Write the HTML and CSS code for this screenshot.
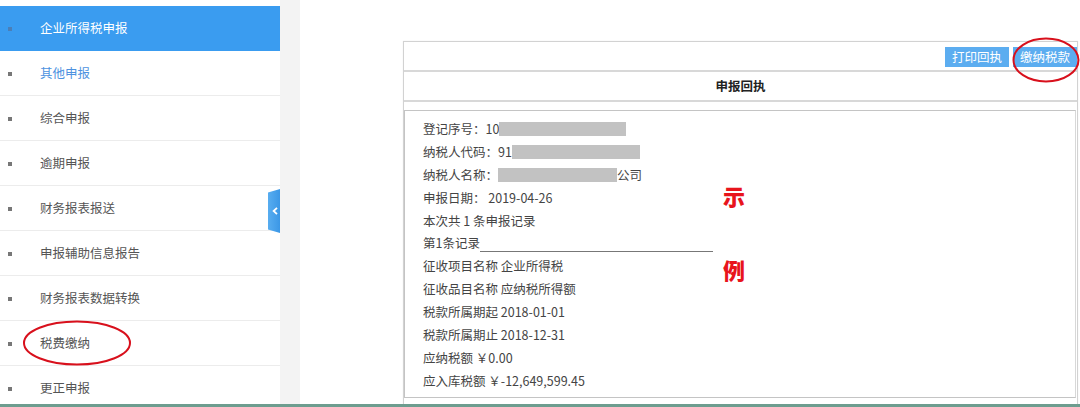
FILE: index.html
```html
<!DOCTYPE html>
<html lang="zh-CN">
<head>
<meta charset="utf-8">
<title>申报回执</title>
<link rel="stylesheet" href="styles.css">
</head>
<body>
<div class="page">
  <aside class="sidebar">
    <ul class="menu">
      <li class="item active"><span class="dot"></span><span class="label">企业所得税申报</span></li>
      <li class="item link"><span class="dot"></span><span class="label">其他申报</span></li>
      <li class="item"><span class="dot"></span><span class="label">综合申报</span></li>
      <li class="item"><span class="dot"></span><span class="label">逾期申报</span></li>
      <li class="item"><span class="dot"></span><span class="label">财务报表报送</span></li>
      <li class="item"><span class="dot"></span><span class="label">申报辅助信息报告</span></li>
      <li class="item"><span class="dot"></span><span class="label">财务报表数据转换</span></li>
      <li class="item"><span class="dot"></span><span class="label">税费缴纳</span></li>
      <li class="item"><span class="dot"></span><span class="label">更正申报</span></li>
    </ul>
    <div class="collapse-tab">
      <svg width="6" height="8" viewBox="0 0 6 8"><path d="M5 0.8 L1.6 4 L5 7.2" fill="none" stroke="#fff" stroke-width="1.8"/></svg>
    </div>
    <svg class="ring ring-menu" width="112" height="48" viewBox="0 0 112 48"><ellipse cx="56" cy="24" rx="53" ry="21.5" fill="none" stroke="#d8101c" stroke-width="2"/></svg>
  </aside>
  <div class="gutter"></div>
  <main class="main">
    <section class="panel">
      <div class="toolbar">
        <button class="btn">打印回执</button>
        <button class="btn">缴纳税款</button>
      </div>
      <div class="title">申报回执</div>
      <div class="receipt">
        <p>登记序号：10<span class="mask w-a"></span></p>
        <p>纳税人代码：91<span class="mask w-b"></span></p>
        <p>纳税人名称：<span class="mask w-c"></span>公司</p>
        <p>申报日期： 2019-04-26</p>
        <p>本次共 1 条申报记录</p>
        <p>第1条记录<span class="rule"></span></p>
        <p>征收项目名称 企业所得税</p>
        <p>征收品目名称 应纳税所得额</p>
        <p>税款所属期起 2018-01-01</p>
        <p>税款所属期止 2018-12-31</p>
        <p>应纳税额 ￥0.00</p>
        <p>应入库税额 ￥-12,649,599.45</p>
        <span class="stamp stamp-1">示</span>
        <span class="stamp stamp-2">例</span>
      </div>
    </section>
    <svg class="ring ring-btn" width="70" height="48" viewBox="0 0 70 48"><ellipse cx="35" cy="24" rx="32.5" ry="21.5" fill="none" stroke="#d8101c" stroke-width="2"/></svg>
  </main>
</div>
</body>
</html>
```

FILE: styles.css
```css
* { box-sizing: border-box; }
html, body { margin: 0; padding: 0; }
body {
  width: 1080px;
  height: 407px;
  overflow: hidden;
  background: #fff;
  font-family: "Noto Sans CJK SC", "Noto Sans", sans-serif;
}
.page {
  display: flex;
  height: 407px;
  border-bottom: 3px solid #6d9d8f;
  overflow: hidden;
  position: relative;
}
.sidebar {
  width: 280px;
  flex: none;
  position: relative;
  background: #fff;
}
.menu {
  list-style: none;
  margin: 0;
  padding: 6px 0 0;
}
.item {
  height: 45px;
  display: flex;
  align-items: center;
  padding-bottom: 2px;
  border-bottom: 1px solid #ececec;
  font-size: 12.5px;
  color: #555;
}
.item .dot {
  width: 4px;
  height: 4px;
  background: #777;
  margin-left: 8px;
  margin-right: 28px;
  margin-top: 4px;
}
.item.active {
  background: #3a9cf0;
  color: #fff;
  border-bottom-color: #3a9cf0;
}
.item.active .dot { background: #4a7fb8; }
.item.link { color: #4d92e0; }
.collapse-tab {
  position: absolute;
  left: 268px;
  top: 189px;
  width: 12px;
  height: 44px;
  background: linear-gradient(90deg, #58adf0, #3b97e6);
  clip-path: polygon(0 8%, 100% 0, 100% 100%, 0 92%);
  display: flex;
  align-items: center;
  justify-content: center;
  padding-left: 1px;
}
.ring { position: absolute; }
.ring-menu { left: 21px; top: 319px; }
.gutter {
  width: 20px;
  flex: none;
  background: #f3f3f3;
}
.main {
  flex: 1;
  position: relative;
  padding: 41px 2px 0 103px;
}
.panel {
  border: 1px solid #d2d2d2;
  box-shadow: 0 0 1px #e6e6e6;
  height: 380px;
}
.toolbar {
  height: 30px;
  display: flex;
  justify-content: flex-end;
  align-items: center;
  gap: 4px;
  border-bottom: 2px solid #d8d8d8;
}
.btn {
  border: none;
  background: #5cadf0;
  color: #fff;
  font-family: inherit;
  font-size: 12.5px;
  height: 20px;
  width: 64px;
  padding: 0;
  margin-top: 2px;
  line-height: 20px;
}
.title {
  height: 30px;
  line-height: 28px;
  text-align: center;
  font-weight: bold;
  font-size: 12.5px;
  color: #222;
  border-bottom: 2px solid #d8d8d8;
}
.receipt {
  position: relative;
  margin: 8px 1px 0 0;
  border: 1px solid #c4c4c4;
  border-right-color: #d8d8d8;
  height: 288px;
  padding: 7px 0 0 18px;
  font-size: 12.5px;
  color: #444;
}
.receipt p {
  margin: 0;
  height: 22.9px;
  line-height: 22.9px;
  white-space: nowrap;
}
.mask {
  display: inline-block;
  height: 14px;
  background: #c2c2c2;
  vertical-align: -2px;
}
.w-a { width: 127px; }
.w-b { width: 128px; }
.w-c { width: 119px; }
.rule {
  display: inline-block;
  width: 233px;
  border-bottom: 1px solid #777;
  height: 14px;
  vertical-align: -4px;
}
.stamp {
  position: absolute;
  left: 318px;
  font-size: 22px;
  font-weight: 900;
  color: #e8141c;
  line-height: 1;
}
.stamp-1 { top: 73px; }
.stamp-2 { top: 147px; }
.ring-btn { left: 711px; top: 36px; }
```
